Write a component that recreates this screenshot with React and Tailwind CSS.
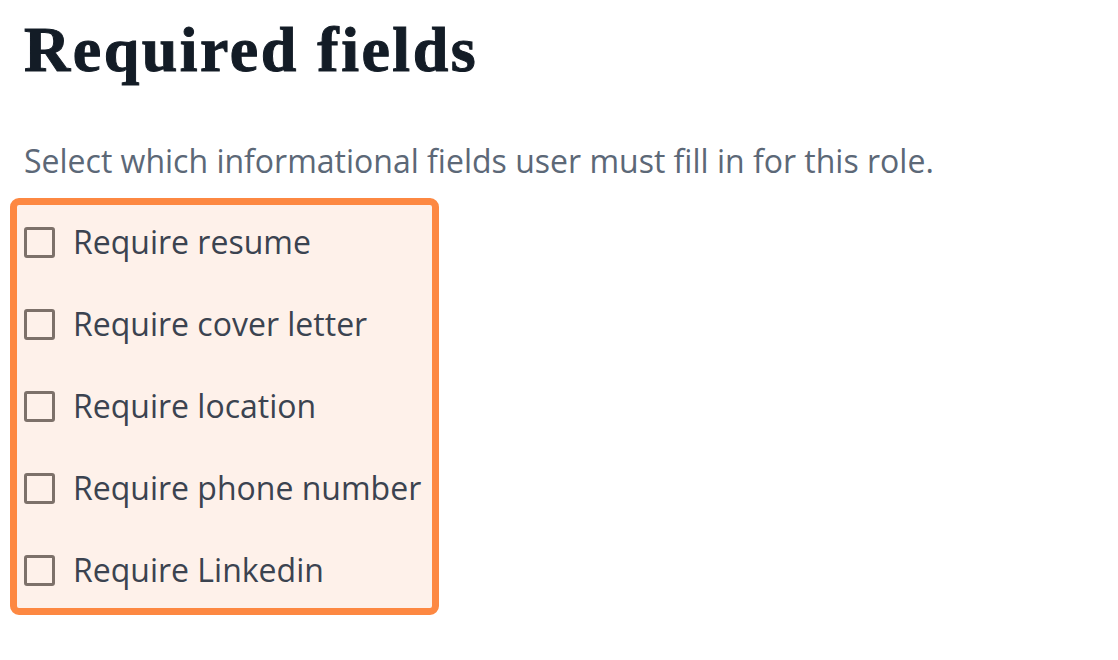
import React from "react";

const fields = [
  "Require resume",
  "Require cover letter",
  "Require location",
  "Require phone number",
  "Require Linkedin",
];

const App = () => {
  return (
    <div className="min-h-[660px] w-full bg-white pl-6 font-['Open_Sans',sans-serif]">
      <h1 className="mt-[18px] font-['Liberation_Serif',serif] text-[64px] font-bold leading-none tracking-[2.5px] text-[#131c26] [-webkit-text-stroke:1px_#131c26]">
        Required fields
      </h1>
      <p className="mt-[57px] text-[32px] leading-[44px] text-[#5c6877]">
        Select which informational fields user must fill in for this role.
      </p>
      <div className="mt-[15px] -ml-[14px] flex w-[429px] flex-col gap-[38px] rounded-[9px] border-[7px] border-[#fd8842] bg-[#fef1ea] pb-[16px] pl-[7px] pt-[15px]">
        {fields.map((field) => (
          <label key={field} className="flex h-[44px] cursor-pointer items-center gap-[18px]">
            <span className="h-[31px] w-[31px] shrink-0 rounded-[3px] border-[3px] border-[#7d716a]"></span>
            <span className="text-[32px] leading-[44px] text-[#3b4350]">{field}</span>
          </label>
        ))}
      </div>
    </div>
  );
};

export default App;
